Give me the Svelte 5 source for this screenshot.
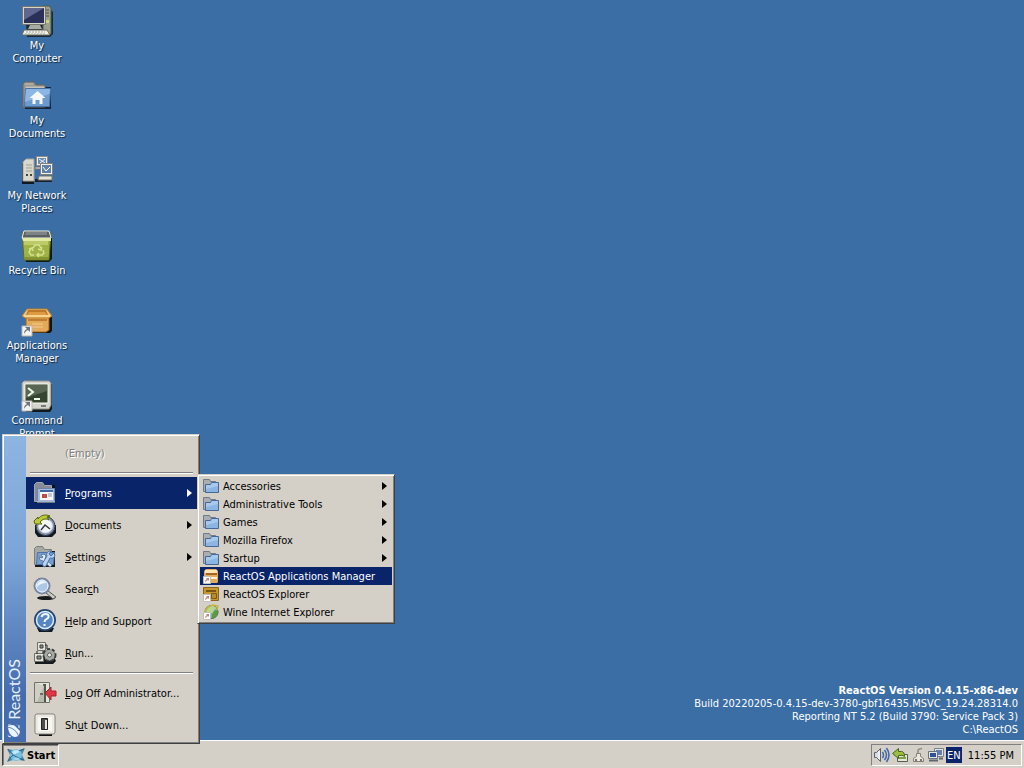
<script>
    const shortcuts = [
        { icon: 'computer', label: 'My Computer' },
        { icon: 'home', label: 'My Documents' },
        { icon: 'network', label: 'My Network Places' },
        { icon: 'bin', label: 'Recycle Bin' },
        { icon: 'box', label: 'Applications Manager' },
        { icon: 'terminal', label: 'Command Prompt' }
    ]

    // the label is split round its underlined access key
    const startmenu = [
        { icon: 'programs', label: ['', 'P', 'rograms'], sub: true },
        { icon: 'documents', label: ['', 'D', 'ocuments'], sub: true },
        { icon: 'settings', label: ['', 'S', 'ettings'], sub: true },
        { icon: 'search', label: ['Sear', 'c', 'h'] },
        { icon: 'help', label: ['', 'H', 'elp and Support'] },
        { icon: 'run', label: ['', 'R', 'un...'] },
        { separator: true },
        { icon: 'logoff', label: ['', 'L', 'og Off Administrator...'] },
        { icon: 'shutdown', label: ['Sh', 'u', 't Down...'] }
    ]

    const programs = [
        { icon: 'folder', label: 'Accessories', sub: true },
        { icon: 'folder', label: 'Administrative Tools', sub: true },
        { icon: 'folder', label: 'Games', sub: true },
        { icon: 'folder', label: 'Mozilla Firefox', sub: true },
        { icon: 'folder', label: 'Startup', sub: true },
        { icon: 'appmanager', label: 'ReactOS Applications Manager' },
        { icon: 'explorer', label: 'ReactOS Explorer' },
        { icon: 'globe', label: 'Wine Internet Explorer' }
    ]

    let open = $state(true)
    let active = $state('programs')
    let activeprogram = $state('ReactOS Applications Manager')
</script>

<svelte:head>
<title>ReactOS</title>
</svelte:head>

{#snippet shortcutarrow()}
    <path d="M1 21h10v10H1z" fill="#f4f4f0" stroke="#b8b8b0" />
    <path d="M3 29c0-3 1-4 3-5l-2-2h5v5l-2-2c-2 1-3 2-4 4z" fill="#6c7480" />
{/snippet}

{#snippet smallarrow()}
    <path d="M.5 8.500h7v7h-7z" fill="#fff" stroke="#c4c0b8" />
    <path d="M2 14c0-2 1-2 2-3l-1-1h3v3l-1-1z" fill="#c08878" />
{/snippet}

{#snippet arrow()}
    <svg class="arrow" viewBox="0 0 5 8" aria-hidden="true"><path d="M0 0v8l5-4z" fill="currentColor" /></svg>
{/snippet}

{#snippet bigicon(name)}
<svg class="bigicon" viewBox="0 0 32 32" aria-hidden="true">
    {#if name === 'computer'}
        <path d="M4 4h25l3 3v22l-3 3H6z" fill="#101418" opacity=".75" />
        <path d="M22 1h6l2 2v26h-8z" fill="#9ba08f" stroke="#55584e" />
        <path d="M24 5h4M24 8h4M24 11h4" stroke="#4c5148" />
        <path d="M25 15h3v3h-3z" fill="#c9d870" />
        <path d="M1.500 1.500h23v18h-23z" fill="#d6d6c8" stroke="#77776b" />
        <path d="M3 3h20v15H3z" fill="#2b3058" />
        <path d="M3 3h20L3 15z" fill="#5f6690" />
        <path d="M9 20h10l2 4H7z" fill="#a9aba0" />
        <path d="M3 25h23l3 5H1z" fill="#efefe5" stroke="#6a6a60" />
        <path d="M5 27h19M4 29h21" stroke="#a7a79b" stroke-dasharray="2 1" />
    {:else if name === 'home'}
        <path d="M4 7h26v22H4z" fill="#13263c" />
        <path d="M2 4l2-2h9l2 3h9v22H2z" fill="#99978e" stroke="#6b6962" />
        <path d="M4 4h8M5 7h18v5H5z" fill="#c5c2b8" stroke="#c5c2b8" />
        <path d="M4.500 8.500h25l-1 18h-25z" fill="#6c9bd0" stroke="#4a73a4" />
        <path d="M5 9h24l-.5 5L4 22z" fill="#8bb6e6" />
        <path d="M16.500 11l8 7h-3v6h-3v-4h-4v4h-3v-6h-3z" fill="#f5f9ff" />
    {:else if name === 'network'}
        <path d="M1 8h12v21H1z" fill="#101820" />
        <path d="M2 7l3-3h8v22H2z" fill="#d8d8ce" stroke="#a4a498" />
        <path d="M5 10h6M5 13h6M5 16h6" stroke="#a0a094" />
        <path d="M5 20h2M9 20h2" stroke="#44443e" stroke-width="2" />
        <path d="M14 24h17v3H14z" fill="#18212c" />
        <path d="M15.500 1.500h11v9h-11z" fill="#f0f0e8" stroke="#8c8c84" />
        <path d="M17 3h8v6h-8z" fill="#6d8cb0" /><path d="M18 4l6 4M24 4l-5 4" stroke="#e5efff" />
        <path d="M14 12h12v2H14z" fill="#ddddcf" stroke="#777" />
        <path d="M19.500 8.500h12v11h-12z" fill="#f0f0e8" stroke="#808078" />
        <path d="M21 10h9v8h-9z" fill="#6281aa" /><path d="M22 12l3 4 4-4" stroke="#fff" fill="none" />
        <path d="M18 21h13v4H17z" fill="#e3e3d7" stroke="#77776c" />
    {:else if name === 'bin'}
        <path d="M4 8h27v21l-3 3H5z" fill="#101b14" />
        <path d="M1 3h29l-2 27H3z" fill="#a0b145" stroke="#5d6d20" />
        <path d="M3 1h25l2 7H1z" fill="#5a5f62" stroke="#edf0df" />
        <path d="M5 2h21v3H4z" fill="#7d8386" />
        <path d="M1 8h29v3H2z" fill="#e1eba6" />
        <path d="M3 11h24v4H3z" fill="#bccb68" />
        <path d="M3 27h25v2H3z" fill="#829330" />
        <path d="M12 18l2-3h4l2 3M21 17l-1 3-3-1M22 20l1 3-2 2h-4M18 23l-2 2 2 2M13 25h-3l-2-3 2-3M8 19l3-1 1 3" fill="none" stroke="#d3e190" stroke-width="1.500" />
    {:else if name === 'box'}
        <path d="M8 12h23v14l-2 2H10z" fill="#14130e" />
        <path d="M5 11h23v14l-3 2H8l-3-2z" fill="#e2ab59" stroke="#9a6322" />
        <path d="M6 4h20l5 7-3 2H4l-3-2z" fill="#f3c578" stroke="#b47926" />
        <path d="M7 5h18l2 5H5z" fill="#bd782a" />
        <path d="M8 7h16l2 3H6z" fill="#dc9b42" />
        <path d="M3 11h26" stroke="#ffe2a2" />
        <path d="M7 14h19v2H7z" fill="#c17c2f" />
        <path d="M11 19h11M11 22h11" stroke="#f5cc8d" />
    {:else if name === 'terminal'}
        <path d="M4 4h27v25l-2 3H5z" fill="#101820" />
        <path d="M1 3l2-2h25l2 2v22l-2 4H4l-3-4z" fill="#d4d5ce" stroke="#8e9089" />
        <path d="M4 4h23v19H4z" fill="#35442f" stroke="#f8f8f0" />
        <path d="M5 5h21v6L5 18z" fill="#586652" />
        <path d="M7 8l5 4-5 4M13 19h6" stroke="#effaec" stroke-width="2" fill="none" />
        <path d="M20 26h5" stroke="#787b73" stroke-width="2" />
    {/if}
    {#if name === 'box' || name === 'terminal'}{@render shortcutarrow()}{/if}
</svg>
{/snippet}

{#snippet menuicon(name)}
<svg class="menuicon" viewBox="0 0 24 24" aria-hidden="true">
    {#if name === 'programs'}
        <path d="M2 4h20v18H2z" fill="#071022" />
        <path d="M1.500 3.500l2-2h6l2 3h7v16h-17z" fill="#858b97" stroke="#a3a7b0" />
        <path d="M4.500 7.500h17v13h-17z" fill="#a5bbdb" stroke="#6c84a8" />
        <path d="M7 9h13v10H7z" fill="#f7f8fc" />
        <path d="M7 9h13v2H7z" fill="#3e68a6" />
        <path d="M9 13h5v4H9z" fill="#ba5145" /><path d="M15 13h4M15 15h4" stroke="#8297bc" />
        <path d="M4 21h18" stroke="#dce3ee" />
    {:else if name === 'documents'}
        <path d="M2 12h21v8l-4 4H5l-3-4z" fill="#111820" />
        <circle cx="12.500" cy="13" r="9.500" fill="#8391a6" stroke="#353f4d" />
        <circle cx="12.500" cy="13" r="7" fill="#f3f5f6" stroke="#ccd4df" />
        <path d="M8 17l4-5 5 4" stroke="#343a43" stroke-width="1.500" fill="none" />
        <path d="M1 8l4-4v2c3-4 7-5 12-3l-3 1 2 3c-4-2-6-1-9 2l2 2H2z" fill="#bbcb35" stroke="#59660d" />
    {:else if name === 'settings'}
        <path d="M2 6h20v16H2z" fill="#151b22" />
        <path d="M1.500 3.500l2-2h6l2 3h7v15h-17z" fill="#a5a8a4" stroke="#7b7f7a" />
        <path d="M4.500 7.500h17l-1 12h-17z" fill="#799dce" stroke="#4d73a5" />
        <path d="M8 10l3-1 2 2-1 3 7 6-2 2-7-6-3-1-1-3 3 1 1-1z" fill="#dfe9f6" stroke="#5d7ea9" />
        <path d="M21 8l-3 3-2-2 2-3c-4 0-5 3-4 5l-5 8 2 3 2-1 4-8c4 1 6-2 4-5z" fill="#b9d1ec" stroke="#486f9e" />
    {:else if name === 'search'}
        <ellipse cx="13" cy="21" rx="9" ry="2" fill="#17191b" />
        <path d="M14 13l9 7-3 2-8-7z" fill="#cacac5" stroke="#53585d" />
        <circle cx="9" cy="9" r="7.500" fill="#adc7e9" stroke="#7a86a0" stroke-width="2" />
        <circle cx="9" cy="9" r="6" fill="none" stroke="#eef6ff" />
        <path d="M4 10c0-7 8-7 9-4-4 0-6 1-9 4z" fill="#edf5ff" />
    {:else if name === 'help'}
        <path d="M4 19h17l-2 4H6z" fill="#131a22" />
        <circle cx="12" cy="11" r="10" fill="#5687c4" stroke="#28466d" stroke-width="2" />
        <circle cx="12" cy="11" r="8.500" fill="none" stroke="#d9ebff" stroke-width="1.500" />
        <path d="M8.500 8c1-4 8-4 7 0 0 2-4 2-4 5M11.500 15v2" fill="none" stroke="#f3f8ff" stroke-width="2" />
    {:else if name === 'run'}
        <path d="M2 20h9v-4h10l2 4-3 3H2z" fill="#151a1f" />
        <path d="M4.500 1.500h8v8h-8zM1.500 12.500h9v8h-9z" fill="#e4e4dc" stroke="#707169" />
        <path d="M4 10v3M10 10v3M12 4h2v4" fill="none" stroke="#23272a" />
        <path d="M7 4h3v3H7zM4 15h4v3H4z" fill="#8e9089" stroke="#3c3e3a" />
        <circle cx="16.500" cy="14" r="6" fill="#858a86" stroke="#393d3c" stroke-width="2" stroke-dasharray="3 2" />
        <circle cx="16.500" cy="14" r="5" fill="#a7aaa3" />
        <circle cx="16.500" cy="14" r="2" fill="#f2f1e9" stroke="#555a57" />
    {:else if name === 'logoff'}
        <path d="M1.500 1.500h15v20h-15z" fill="#e6e5dd" stroke="#72746c" />
        <path d="M10 3h3v18h-3z" fill="#55574f" />
        <path d="M2 2l9 3v16H2z" fill="#b8b9ac" />
        <path d="M2 2l9 3-7 16H2z" fill="#cfd0c3" />
        <path d="M7 13h3" stroke="#6b6e65" stroke-width="2" />
        <path d="M12 12l6-6v4h5v5h-5v4z" fill="#df3644" stroke="#a02430" />
    {:else if name === 'shutdown'}
        <path d="M6 20h13v3H6z" fill="#111" />
        <rect x="2" y="1" width="20" height="20" rx="2" fill="#f7f6f0" stroke="#7f7e77" />
        <path d="M4 3h16v16H4z" fill="none" stroke="#dedcd5" />
        <path d="M8.500 5.500h6v11h-6z" fill="#4d4e4c" stroke="#222" />
        <path d="M12 7h2v9h-2z" fill="#e8e7df" />
    {/if}
</svg>
{/snippet}

{#snippet smallicon(name)}
<svg class="smallicon" viewBox="0 0 16 16" aria-hidden="true">
    {#if name === 'folder'}
        <path d="M.5 13.500V1.500h6l1 2h5v10z" fill="#a9aeb2" stroke="#6d7a88" />
        <path d="M2.500 14.500v-8h5l1-2h7v10z" fill="#8db5e2" stroke="#456994" />
        <path d="M3 7h5l1-2h6v3l-12 3z" fill="#a8c9ee" />
    {:else if name === 'appmanager'}
        <path d="M1 3l2-2h10l2 2v11l-1 1H2l-1-1z" fill="#e3ad5c" />
        <path d="M2 2h12v3H2z" fill="#ffe6b4" /><path d="M3 5h11v2H3z" fill="#a66225" />
        <path d="M2 9h12v2H2z" fill="#fff0d0" />
        {@render smallarrow()}
    {:else if name === 'explorer'}
        <path d="M.5 1.500h15v13H.5z" fill="#c89631" stroke="#8a6420" />
        <path d="M3 4h10v2H3z" fill="#795513" /><path d="M8.500 7.500h5v5h-5z" fill="#b88a2c" stroke="#7d5a18" />
        {@render smallarrow()}
    {:else if name === 'globe'}
        <circle cx="8.500" cy="8" r="6.500" fill="#6eaac9" stroke="#315d58" />
        <path d="M4 3l5-2 5 3-3 2-1 4-4-2-3 1z" fill="#b8d685" />
        <path d="M11 7l4-1-1 6-5 3v-5z" fill="#5d9a3c" />
        <path d="M2 8c1-4 4-6 8-7l5 1-1 4" stroke="#c9b340" stroke-width="1.500" fill="none" />
        {@render smallarrow()}
    {:else if name === 'speaker'}
        <path d="M.5 5.500h2l4-4v13l-4-4h-2z" fill="#d8dce2" stroke="#59616c" />
        <path d="M5 4v8" stroke="#fff" />
        <path d="M8.500 5q2 3 0 6M10.500 3q4 5 0 10M12.500 1q5 7 0 14" fill="none" stroke="#4167aa" stroke-width="1.500" />
    {:else if name === 'eject'}
        <path d="M5.500 7.500h10v7h-10z" fill="#e5e8d8" stroke="#596052" />
        <path d="M7 11h7" stroke="#7da24c" stroke-width="2" />
        <path d="M.5 6.500l6-5v3h3q3 0 3 5-2-2-6-1v3z" fill="#9bbf43" stroke="#46631b" />
    {:else if name === 'plug'}
        <path d="M8 7V4q0-2 2-2t1-1" fill="none" stroke="#8a8982" stroke-width="1.500" />
        <path d="M6.500 6.500h4v3l3 2v3h-10v-3l3-2z" fill="#eae8de" stroke="#838078" />
        <path d="M5 12h2v2H5zM10 12h2v2h-2z" fill="#77756e" />
    {:else if name === 'lan'}
        <path d="M6.500 1.500h9v8h-9z" fill="#e3e5e2" stroke="#7a818b" /><path d="M8 3h6v5H8z" fill="#657eaf" />
        <path d="M.5 4.500h9v7h-9z" fill="#e3e5e2" stroke="#6a7381" /><path d="M2 6h6v4H2z" fill="#324f98" />
        <path d="M1 13.500h9M11 11.500h4" fill="none" stroke="#60656c" stroke-width="2" />
    {/if}
</svg>
{/snippet}

<div class="screen">
    <main class="desktop">
        <div class="shortcuts">
            {#each shortcuts as item}
                <button class="shortcut">
                    {@render bigicon(item.icon)}
                    <span class="caption">{item.label}</span>
                </button>
            {/each}
        </div>
        <div class="version">
            <strong>ReactOS Version 0.4.15-x86-dev</strong>
            <span>Build 20220205-0.4.15-dev-3780-gbf16435.MSVC_19.24.28314.0</span>
            <span>Reporting NT 5.2 (Build 3790: Service Pack 3)</span>
            <span>C:\ReactOS</span>
        </div>
    </main>

    <footer class="taskbar">
        <button class="start" class:pressed={open} onclick={() => (open = !open)}>
            <svg class="startlogo" viewBox="0 0 18 16" aria-hidden="true">
                <path d="M0 2l6 1h6l6-2-3 7 3 6-6-1H6l-6 2 3-7z" fill="#4a8cab" />
                <ellipse cx="9" cy="8" rx="6" ry="6" fill="#78bfe0" />
                <path d="M1 2q5 8 16 11M1 14q4-6 7-7M12 4l5-2" fill="none" stroke="#2c6482" />
                <path d="M5 5q4-4 8 0-4 1-6 3z" fill="#c4e8fa" />
                <path d="M6 12q4-3 7 0-3 2-7 0z" fill="#a5d9f2" />
            </svg>
            Start
        </button>
        <div class="tray">
            {@render smallicon('speaker')}
            {@render smallicon('eject')}
            {@render smallicon('plug')}
            {@render smallicon('lan')}
            <button class="lang">EN</button>
            <time class="clock">11:55 PM</time>
        </div>
    </footer>

    {#if open}
    <nav class="menu startmenu" aria-label="Start menu">
        <div class="banner">
            <span class="brand">ReactOS</span>
            <svg class="brandlogo" viewBox="0 0 14 14" aria-hidden="true">
                <path d="M1 2q5-2 7 0l5 5q0 3-2 5-3 2-6 0-4-3-4-10z" fill="#f0f6ff" />
                <path d="M0 3q9 1 12 10M0 11q2-1 4 1M9 0q2 1 4 5" fill="none" stroke="#5f88c4" />
                <path d="M1 1l3 0M12 1v3M1 12l3 1" fill="none" stroke="#dceaff" />
            </svg>
        </div>
        <div class="items">
            <button class="item empty" disabled>(Empty)</button>
            <div class="separator"></div>
            {#each startmenu as item}
                {#if item.separator}
                    <div class="separator"></div>
                {:else}
                    <button class="item" class:selected={active === item.icon} onmouseenter={() => (active = item.icon)}>
                        {@render menuicon(item.icon)}
                        <span class="text">{item.label[0]}<u>{item.label[1]}</u>{item.label[2]}</span>
                        {#if item.sub}{@render arrow()}{/if}
                    </button>
                {/if}
            {/each}
        </div>
        {#if active === 'programs'}
        <div class="menu submenu">
            {#each programs as item}
                <button class="subitem" class:selected={activeprogram === item.label} onmouseenter={() => (activeprogram = item.label)}>
                    {@render smallicon(item.icon)}
                    <span class="text">{item.label}</span>
                    {#if item.sub}{@render arrow()}{/if}
                </button>
            {/each}
        </div>
        {/if}
    </nav>
    {/if}
</div>

<style>
    :global(body) {
        background: #3a6ea5;
    }
    .screen {
        position: relative;
        display: flex;
        flex-direction: column;
        height: 100vh;
        overflow: hidden;
        font-family: "DejaVu Sans Condensed", "DejaVu Sans", sans-serif;
        font-size: 11px;
        line-height: 13px;
        color: #000;
    }
    button {
        margin: 0;
        padding: 0;
        border: 0;
        background: none;
        color: inherit;
        font: inherit;
    }
    svg {
        display: block;
        flex: none;
    }
    .desktop {
        flex: 1;
        min-height: 0;
        display: flex;
        justify-content: space-between;
        background: #3a6ea5;
        color: #fff;
    }
    .shortcuts {
        display: flex;
        flex-direction: column;
        width: 74px;
    }
    .shortcut {
        display: flex;
        flex-direction: column;
        align-items: center;
        gap: 2px;
        height: 75px;
        flex: none;
        padding-top: 5px;
    }
    .bigicon {
        width: 32px;
        height: 32px;
    }
    .caption {
        width: 64px;
        text-align: center;
        text-shadow: 1px 1px 1px #10243c;
    }
    .version {
        align-self: flex-end;
        display: flex;
        flex-direction: column;
        text-align: right;
        padding: 0 6px 4px 0;
    }
    .taskbar {
        flex: none;
        display: flex;
        justify-content: space-between;
        padding: 3px 2px 2px;
        height: 22px;
        background: #d4d0c8;
        border-top: 1px solid #fff;
    }
    .start {
        display: flex;
        align-items: center;
        gap: 2px;
        padding: 0 3px 0 4px;
        font-weight: bold;
        border: 1px solid;
        border-color: #fff #404040 #404040 #fff;
    }
    .start.pressed {
        border-color: #404040 #fff #fff #404040;
        box-shadow: inset 1px 1px #808080;
    }
    .startlogo {
        width: 18px;
        height: 16px;
    }
    .tray {
        display: flex;
        align-items: center;
        gap: 2px;
        padding: 0 7px 0 2px;
        border: 1px solid;
        border-color: #808080 #fff #fff #808080;
    }
    .lang {
        width: 16px;
        height: 16px;
        background: #0a246a;
        color: #fff;
    }
    .clock {
        padding-left: 4px;
    }
    .menu {
        position: absolute;
        background: #d4d0c8;
        border: 1px solid;
        border-color: #d4d0c8 #404040 #404040 #d4d0c8;
        box-shadow: inset 1px 1px #fff, inset -1px -1px #808080;
    }
    .startmenu {
        left: 2px;
        bottom: 24px;
        display: flex;
        width: 193px;
        padding: 1px 2px 1px 1px;
    }
    .banner {
        flex: none;
        display: flex;
        flex-direction: column;
        justify-content: flex-end;
        align-items: center;
        gap: 4px;
        width: 20px;
        padding: 0 2px 4px 0;
        background: linear-gradient(#8db5e2, #7ba5d7 40%, #456dae 85%);
    }
    .brand {
        writing-mode: vertical-rl;
        transform: rotate(180deg);
        font-family: Lato, sans-serif;
        font-size: 16px;
        line-height: 20px;
        color: #e8f0fc;
    }
    .brandlogo {
        width: 14px;
        height: 14px;
    }
    .items {
        flex: 1;
        padding: 1px 0;
    }
    .item,
    .subitem {
        display: flex;
        align-items: center;
        width: 100%;
        text-align: left;
    }
    .item {
        height: 32px;
        gap: 8px;
        padding: 0 5px 0 7px;
    }
    .item.empty {
        padding-left: 39px;
        color: #808080;
        text-shadow: 1px 1px #fff;
    }
    .subitem {
        height: 18px;
        gap: 4px;
        padding: 0 5px 0 3px;
    }
    .selected {
        background: #0a246a;
        color: #fff;
    }
    .text {
        flex: 1;
        white-space: nowrap;
    }
    .menuicon {
        width: 24px;
        height: 24px;
    }
    .smallicon {
        width: 16px;
        height: 16px;
    }
    .arrow {
        width: 5px;
        height: 8px;
    }
    .separator {
        margin: 3px 4px;
        border-top: 1px solid #808080;
        border-bottom: 1px solid #fff;
    }
    .submenu {
        left: 194px;
        top: 39px;
        width: 192px;
        padding: 2px;
    }
</style>
